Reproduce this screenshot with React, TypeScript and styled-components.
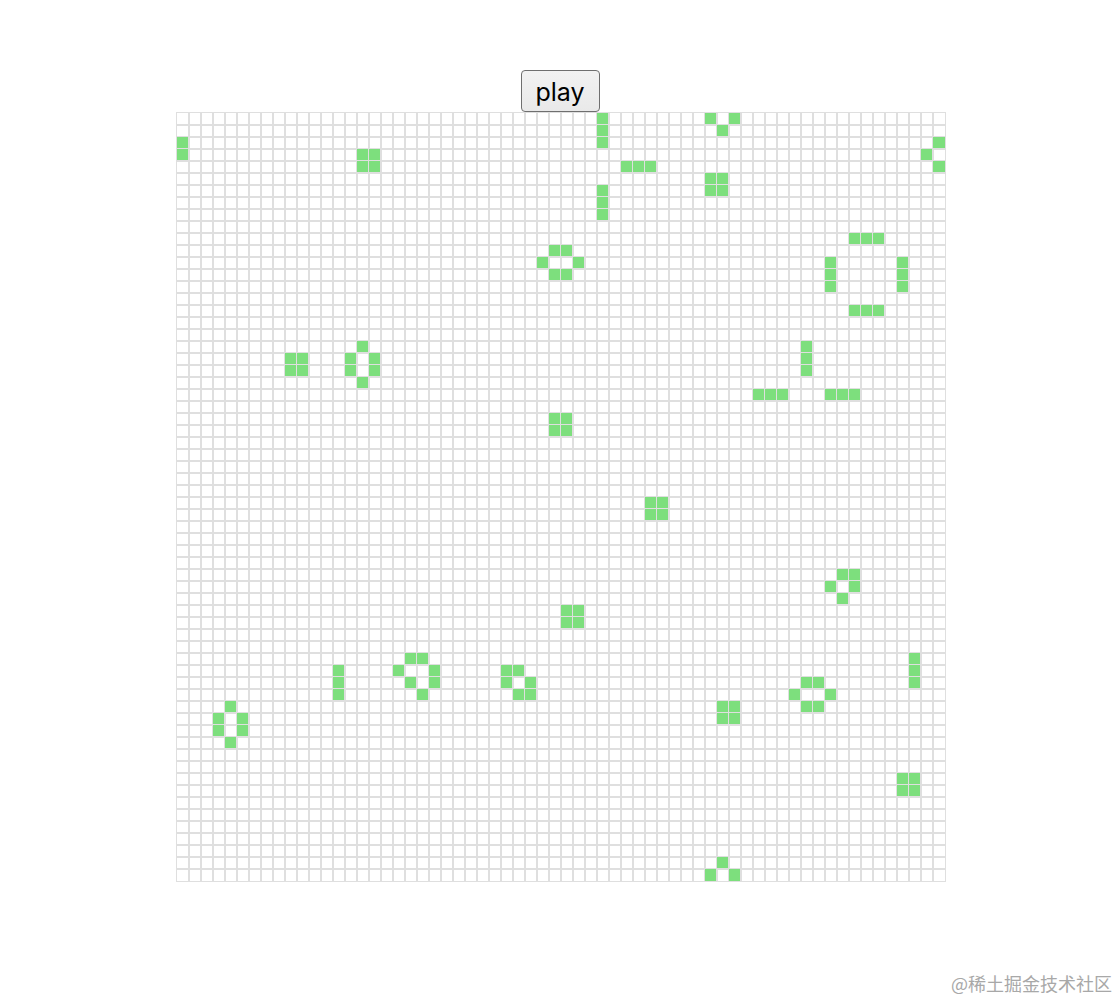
import React from 'react';
import styled, { createGlobalStyle } from 'styled-components';

const ROWS = 64;
const COLS = 64;

const LIVE: Array<[number, number]> = [
  // top traffic-light arms
  [0, 35], [1, 35], [2, 35],
  [4, 37], [4, 38], [4, 39],
  [6, 35], [7, 35], [8, 35],
  // beehive wrapping top/bottom
  [0, 44], [0, 46], [1, 45], [62, 45], [63, 44], [63, 46],
  // boat wrapping left/right
  [2, 63], [3, 62], [4, 63], [2, 0], [3, 0],
  // blocks
  [3, 15], [3, 16], [4, 15], [4, 16],
  [5, 44], [5, 45], [6, 44], [6, 45],
  [20, 9], [20, 10], [21, 9], [21, 10],
  [25, 31], [25, 32], [26, 31], [26, 32],
  [32, 39], [32, 40], [33, 39], [33, 40],
  [41, 32], [41, 33], [42, 32], [42, 33],
  [49, 45], [49, 46], [50, 45], [50, 46],
  [55, 60], [55, 61], [56, 60], [56, 61],
  // beehives
  [11, 31], [11, 32], [12, 30], [12, 33], [13, 31], [13, 32],
  [19, 15], [20, 14], [20, 16], [21, 14], [21, 16], [22, 15],
  [47, 52], [47, 53], [48, 51], [48, 54], [49, 52], [49, 53],
  [49, 4], [50, 3], [50, 5], [51, 3], [51, 5], [52, 4],
  // right traffic light
  [10, 56], [10, 57], [10, 58],
  [12, 54], [13, 54], [14, 54],
  [12, 60], [13, 60], [14, 60],
  [16, 56], [16, 57], [16, 58],
  // T pattern
  [19, 52], [20, 52], [21, 52],
  [23, 48], [23, 49], [23, 50],
  [23, 54], [23, 55], [23, 56],
  // boat
  [38, 55], [38, 56], [39, 54], [39, 56], [40, 55],
  // blinkers
  [46, 13], [47, 13], [48, 13],
  [45, 61], [46, 61], [47, 61],
  // loaf
  [45, 19], [45, 20], [46, 18], [46, 21], [47, 19], [47, 21], [48, 20],
  // ship
  [46, 27], [46, 28], [47, 27], [47, 29], [48, 28], [48, 29],
];

const liveSet = new Set(LIVE.map(([r, c]) => `${r},${c}`));

const GlobalStyle = createGlobalStyle`
  html, body {
    margin: 0;
    padding: 0;
    background: #ffffff;
  }
  body {
    font-family: "Liberation Sans", Arial, sans-serif;
  }
`;

const Page = styled.div`
  position: relative;
  box-sizing: border-box;
  min-height: 1002px;
  padding: 70px 0 0 2px;
  display: flex;
  flex-direction: column;
  align-items: center;
`;

const PlayButton = styled.button`
  box-sizing: border-box;
  width: 79px;
  height: 42px;
  padding: 3px 0 0;
  font-family: Inter, "Liberation Sans", Arial, sans-serif;
  font-size: 25px;
  line-height: 1;
  color: #000000;
  background: linear-gradient(#f2f2f2, #e9e9e9);
  border: 1px solid #6f6f6f;
  border-radius: 4px;
  cursor: pointer;
`;

const Board = styled.div`
  display: grid;
  grid-template-columns: repeat(${COLS}, 12px);
  grid-auto-rows: 12px;
  width: ${COLS * 12}px;
`;

const Cell = styled.div<{ $alive: boolean }>`
  box-sizing: border-box;
  width: 14px;
  height: 14px;
  border: 1px solid #dfdfdf;
  background: ${(p) => (p.$alive ? '#7ddf7d' : 'transparent')};
`;

const Watermark = styled.div`
  position: absolute;
  right: 6px;
  bottom: 6px;
  font-family: "Noto Sans CJK SC", "Liberation Sans", sans-serif;
  font-size: 18px;
  color: #a8a8a8;
`;

export default function App() {
  const cells: React.ReactNode[] = [];
  for (let r = 0; r < ROWS; r++) {
    for (let c = 0; c < COLS; c++) {
      cells.push(<Cell key={`${r}-${c}`} $alive={liveSet.has(`${r},${c}`)} />);
    }
  }
  return (
    <>
      <GlobalStyle />
      <Page>
        <PlayButton>play</PlayButton>
        <Board>{cells}</Board>
        <Watermark>@稀土掘金技术社区</Watermark>
      </Page>
    </>
  );
}
